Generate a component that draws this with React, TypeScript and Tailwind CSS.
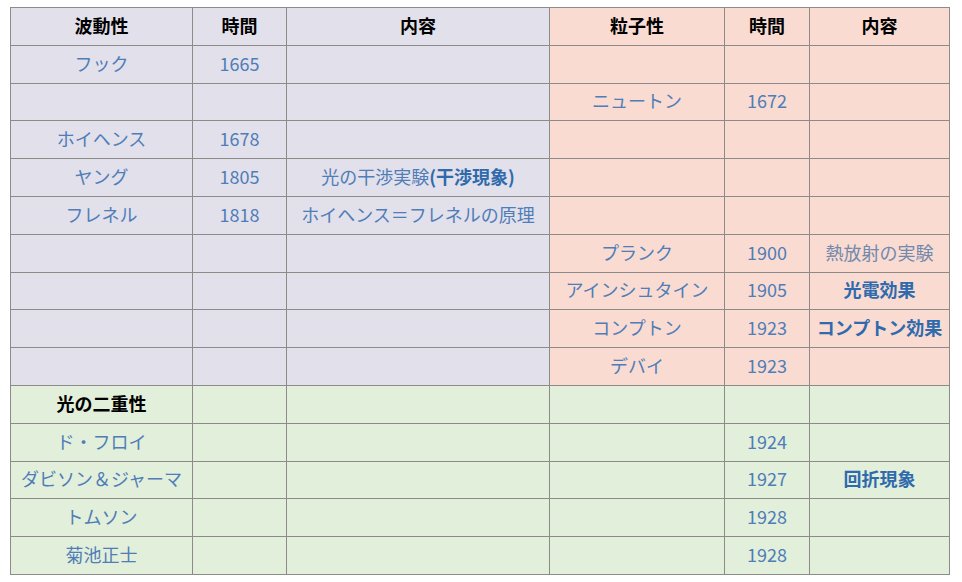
import React from "react";

type Cell = { t?: React.ReactNode; b?: boolean; k?: boolean; g?: boolean };

const L = "bg-[#e2e0ea]";
const P = "bg-[#f9dbd2]";
const G = "bg-[#e2efda]";

const rows: { bg: string[]; cells: Cell[] }[] = [
  {
    bg: [L, L, L, P, P, P],
    cells: [
      { t: "波動性", k: true },
      { t: "時間", k: true },
      { t: "内容", k: true },
      { t: "粒子性", k: true },
      { t: "時間", k: true },
      { t: "内容", k: true },
    ],
  },
  { bg: [L, L, L, P, P, P], cells: [{ t: "フック" }, { t: "1665" }, {}, {}, {}, {}] },
  { bg: [L, L, L, P, P, P], cells: [{}, {}, {}, { t: "ニュートン" }, { t: "1672" }, {}] },
  { bg: [L, L, L, P, P, P], cells: [{ t: "ホイヘンス" }, { t: "1678" }, {}, {}, {}, {}] },
  {
    bg: [L, L, L, P, P, P],
    cells: [
      { t: "ヤング" },
      { t: "1805" },
      {
        t: (
          <>
            光の干渉実験<span className="font-bold text-[#2f6aad]">(干渉現象)</span>
          </>
        ),
      },
      {},
      {},
      {},
    ],
  },
  {
    bg: [L, L, L, P, P, P],
    cells: [{ t: "フレネル" }, { t: "1818" }, { t: "ホイヘンス＝フレネルの原理" }, {}, {}, {}],
  },
  {
    bg: [L, L, L, P, P, P],
    cells: [{}, {}, {}, { t: "プランク" }, { t: "1900" }, { t: "熱放射の実験", g: true }],
  },
  {
    bg: [L, L, L, P, P, P],
    cells: [{}, {}, {}, { t: "アインシュタイン" }, { t: "1905" }, { t: "光電効果", b: true }],
  },
  {
    bg: [L, L, L, P, P, P],
    cells: [{}, {}, {}, { t: "コンプトン" }, { t: "1923" }, { t: "コンプトン効果", b: true }],
  },
  { bg: [L, L, L, P, P, P], cells: [{}, {}, {}, { t: "デバイ" }, { t: "1923" }, {}] },
  { bg: [G, G, G, G, G, G], cells: [{ t: "光の二重性", k: true }, {}, {}, {}, {}, {}] },
  { bg: [G, G, G, G, G, G], cells: [{ t: "ド・フロイ" }, {}, {}, {}, { t: "1924" }, {}] },
  {
    bg: [G, G, G, G, G, G],
    cells: [{ t: "ダビソン＆ジャーマ" }, {}, {}, {}, { t: "1927" }, { t: "回折現象", b: true }],
  },
  { bg: [G, G, G, G, G, G], cells: [{ t: "トムソン" }, {}, {}, {}, { t: "1928" }, {}] },
  { bg: [G, G, G, G, G, G], cells: [{ t: "菊池正士" }, {}, {}, {}, { t: "1928" }, {}] },
];

const widths = ["w-[182px]", "w-[94px]", "w-[263px]", "w-[175px]", "w-[85px]", "w-[140px]"];

export default function App() {
  return (
    <div
      className="w-[962px] h-[582px] bg-white pt-[7px] pl-[10px]"
      style={{ fontFamily: '"Noto Sans CJK JP", "Noto Sans", sans-serif' }}
    >
      <table className="table-fixed border-collapse w-[939px] text-[18px] leading-none">
        <colgroup>
          {widths.map((w, i) => (
            <col key={i} className={w} />
          ))}
        </colgroup>
        <tbody>
          {rows.map((r, ri) => (
            <tr key={ri} className="h-[37.8px]">
              {r.cells.map((c, ci) => {
                let color = "text-[#4f7db8] font-normal";
                if (c.k) color = "text-black font-bold";
                else if (c.b) color = "text-[#2f6aad] font-bold";
                else if (c.g) color = "text-[#7389ac] font-normal";
                return (
                  <td
                    key={ci}
                    className={`${r.bg[ci]} border border-[#8d8a8a] px-0 pt-0 pb-[3px] text-center align-middle whitespace-nowrap overflow-visible ${color}`}
                  >
                    {c.t}
                  </td>
                );
              })}
            </tr>
          ))}
        </tbody>
      </table>
    </div>
  );
}
